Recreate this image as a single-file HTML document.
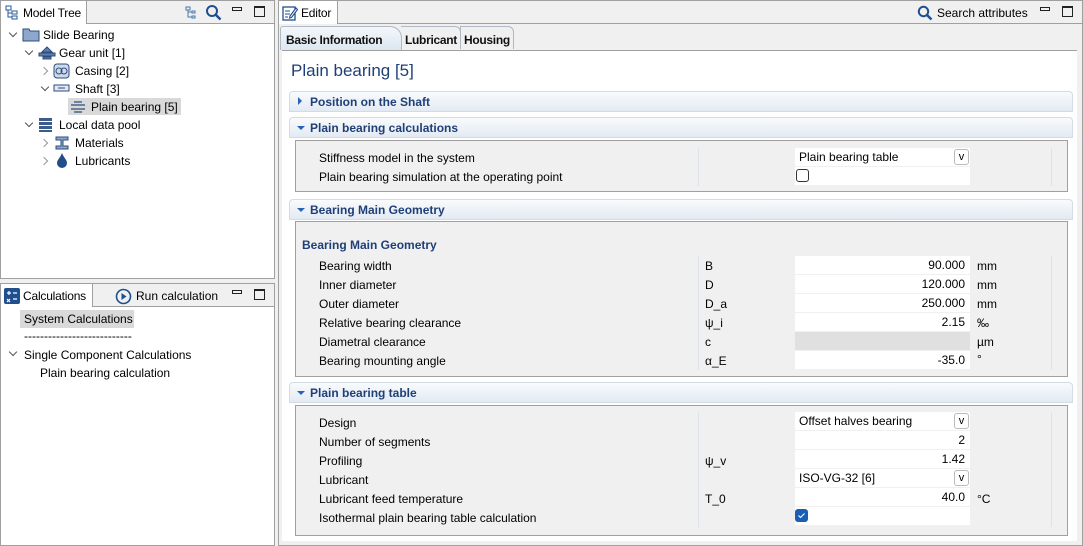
<!DOCTYPE html>
<html><head><meta charset="utf-8">
<style>
*{box-sizing:border-box;margin:0;padding:0}
body{width:1083px;height:546px;background:#f0f0f0;font-family:"Liberation Sans",sans-serif;font-size:12px;color:#000;position:relative;overflow:hidden}
.a{position:absolute;white-space:nowrap}
.panel{position:absolute;border:1px solid #a0a0a0;background:#fff}
.hdr{position:absolute;left:0;right:0;top:0;height:23px;background:#f0f0f0;border-bottom:1px solid #a0a0a0}
.tab{position:absolute;top:-1px;height:24px;background:#fff;border:1px solid #a0a0a0;border-bottom:none;padding:5px 0 0 22px;white-space:nowrap;letter-spacing:-0.2px}
.sec{position:absolute;left:289px;width:784px;height:21px;border:1px solid #d3dbe6;border-radius:4px 4px 0 0;background:linear-gradient(#f9fbfd,#e3eaf3);color:#1f3f77;font-weight:bold;padding:3px 0 0 20px}
.tri{position:absolute;left:7px;top:8px;width:0;height:0;border-left:4px solid transparent;border-right:4px solid transparent;border-top:4px solid #2a62b8}
.trir{position:absolute;left:8px;top:5px;width:0;height:0;border-top:4px solid transparent;border-bottom:4px solid transparent;border-left:4px solid #2a62b8}
.body{position:absolute;left:295px;width:773px;background:#f0f0f0;border:1px solid #a0a0a0}
.val{position:absolute;left:795px;width:175px;height:18px;background:#fff;text-align:right;padding:2px 5px 0 4px}
.vl{text-align:left}
.dd{position:absolute;right:1px;top:1px;width:15px;height:16px;border:1px solid #bbb;border-radius:3px;font-size:11px;text-align:center;line-height:14px;background:#fff}
.vd{position:absolute;width:1px;background:#dde3ea}
.min{position:absolute;width:10px;height:4px;border:1px solid #222}
.max{position:absolute;width:11px;height:11px;border:1px solid #222;border-top-width:2px}
.chev{position:absolute;width:6px;height:6px;border-right:1.3px solid #555;border-bottom:1.3px solid #555}
.d{transform:rotate(45deg)}
.r{transform:rotate(-45deg);border-color:#999}
.st{position:absolute;font-weight:bold;color:#111;white-space:nowrap;letter-spacing:-0.3px;font-size:12px}
</style></head><body>

<!-- Model tree panel -->
<div class="panel" style="left:0;top:0;width:275px;height:279px">
 <div class="hdr"></div>
 <div class="tab" style="left:-1px;width:87px">Model Tree</div>
 <svg class="a" style="left:4px;top:4px" width="14" height="15"><rect x="1" y="1" width="5" height="4" fill="none" stroke="#2a5a9a"/><rect x="7" y="6" width="5" height="3" fill="none" stroke="#2a5a9a"/><rect x="7" y="11" width="5" height="3" fill="none" stroke="#2a5a9a"/><path d="M3 5v7h4M3 8h4" stroke="#2a5a9a" fill="none"/></svg>
 <svg class="a" style="left:183px;top:4px" width="14" height="15"><path d="M2 2h4v3H2zM8 6h3v2H8zM8 11h3v2H8zM4 5v7h4M4 7h4" stroke="#4a78b0" fill="none"/></svg>
 <svg class="a" style="left:204px;top:3px" width="17" height="17"><circle cx="7" cy="7" r="5" fill="none" stroke="#1d4f91" stroke-width="2"/><path d="M10.5 10.5l5 5" stroke="#1d4f91" stroke-width="2.5"/></svg>
 <div class="min" style="left:231px;top:6px"></div>
 <div class="max" style="left:253px;top:5px"></div>
</div>
<div class="chev d a" style="left:10px;top:30px"></div>
<svg class="a" style="left:22px;top:28px" width="18" height="14"><path d="M1 1h6l1 2h9v10H1z" fill="#8ea7cc" stroke="#2e4d7d"/></svg>
<div class="a" style="left:43px;top:28px">Slide Bearing</div>
<div class="chev d a" style="left:26px;top:48px"></div>
<svg class="a" style="left:38px;top:45px" width="18" height="16"><path d="M4 7l5-5 5 5zM1 8h16v3H1zM5 12h8v2H5z" fill="#5d7fb0" stroke="#2e4d7d"/></svg>
<div class="a" style="left:59px;top:46px">Gear unit [1]</div>
<div class="chev r a" style="left:41px;top:68px"></div>
<svg class="a" style="left:53px;top:63px" width="17" height="16"><rect x="1" y="1" width="15" height="14" rx="3" fill="#cfd9ea" stroke="#2e4d7d"/><circle cx="6" cy="8" r="3" fill="none" stroke="#2e4d7d"/><circle cx="11" cy="8" r="3" fill="none" stroke="#2e4d7d"/></svg>
<div class="a" style="left:75px;top:64px">Casing [2]</div>
<div class="chev d a" style="left:42px;top:84px"></div>
<svg class="a" style="left:53px;top:84px" width="17" height="8"><rect x="1" y="1" width="15" height="6" fill="#e0e8f3" stroke="#2e4d7d"/><path d="M5 4h7" stroke="#2e4d7d"/></svg>
<div class="a" style="left:75px;top:82px">Shaft [3]</div>
<div class="a" style="left:68px;top:98px;width:113px;height:17px;background:#d9d9d9"></div>
<svg class="a" style="left:70px;top:100px" width="16" height="14"><path d="M4 2h8M1 5h14M1 9h14M4 12h8" stroke="#2e4d7d" stroke-width="1.3"/></svg>
<div class="a" style="left:91px;top:100px">Plain bearing [5]</div>
<div class="chev d a" style="left:26px;top:120px"></div>
<svg class="a" style="left:38px;top:117px" width="15" height="16"><rect x="1" y="1" width="13" height="3" fill="#3c5c8c"/><rect x="1" y="5" width="13" height="3" fill="#3c5c8c"/><rect x="1" y="9" width="13" height="3" fill="#3c5c8c"/><rect x="1" y="13" width="13" height="2" fill="#3c5c8c"/></svg>
<div class="a" style="left:59px;top:118px">Local data pool</div>
<div class="chev r a" style="left:41px;top:140px"></div>
<svg class="a" style="left:54px;top:135px" width="17" height="16"><path d="M2 2h12v3H9v6h5v3H2v-3h5V5H2z" fill="#8ea7cc" stroke="#2e4d7d"/></svg>
<div class="a" style="left:75px;top:136px">Materials</div>
<div class="chev r a" style="left:41px;top:158px"></div>
<svg class="a" style="left:56px;top:152px" width="12" height="16"><path d="M6 1C4 6 1 8 1 11a5 5 0 0 0 10 0C11 8 8 6 6 1z" fill="#234d88"/></svg>
<div class="a" style="left:75px;top:154px">Lubricants</div>

<!-- Calculations panel -->
<div class="panel" style="left:0;top:283px;width:275px;height:263px">
 <div class="hdr"></div>
 <div class="tab" style="left:-1px;width:93px">Calculations</div>
 <svg class="a" style="left:3px;top:4px" width="16" height="16"><rect width="16" height="16" rx="2" fill="#1f4f8f"/><path d="M3 5h4M5 3v4M9 5h4M3 11l3 3M6 11l-3 3M9 11h4" stroke="#fff" stroke-width="1.2"/></svg>
 <svg class="a" style="left:114px;top:4px" width="17" height="17"><circle cx="8.5" cy="8.5" r="7" fill="none" stroke="#1d4f91" stroke-width="1.6"/><path d="M6.5 5v7l5-3.5z" fill="#1d4f91"/></svg>
 <div class="a" style="left:135px;top:5px">Run calculation</div>
 <div class="min" style="left:231px;top:6px"></div>
 <div class="max" style="left:253px;top:5px"></div>
</div>
<div class="a" style="left:20px;top:310px;width:114px;height:18px;background:#d9d9d9"></div>
<div class="a" style="left:24px;top:312px">System Calculations</div>
<div class="a" style="left:24px;top:329px">---------------------------</div>
<div class="chev d a" style="left:10px;top:349px"></div>
<div class="a" style="left:24px;top:348px">Single Component Calculations</div>
<div class="a" style="left:40px;top:366px">Plain bearing calculation</div>

<!-- Editor panel -->
<div class="panel" style="left:278px;top:0;width:805px;height:546px;background:#f0f0f0">
 <div class="hdr"></div>
 <div class="tab" style="left:-1px;width:60px">Editor</div>
 <svg class="a" style="left:3px;top:4px" width="16" height="16"><rect x="1" y="2" width="12" height="13" fill="none" stroke="#1f4f8f" stroke-width="1.3"/><path d="M3 6h5M3 9h5M3 12h3M8 11l6-8 1.5 1.5-6 8-2 .5z" stroke="#1f4f8f" fill="#fff" stroke-width="1.1"/></svg>
 <svg class="a" style="left:638px;top:4px" width="16" height="16"><circle cx="6.5" cy="6.5" r="4.7" fill="none" stroke="#1d4f91" stroke-width="2"/><path d="M10 10l4.5 4.5" stroke="#1d4f91" stroke-width="2.4"/></svg>
 <div class="a" style="left:658px;top:5px">Search attributes</div>
 <div class="min" style="left:761px;top:6px"></div>
 <div class="max" style="left:783px;top:5px"></div>
</div>
<!-- subtabs -->
<div class="a" style="left:280px;top:26px;width:122px;height:24px;border:1px solid #b0b8c4;border-bottom:none;border-radius:3px 12px 0 0;background:linear-gradient(#f4f7fb,#dde6f1)"></div>
<div class="st" style="left:286px;top:33px">Basic Information</div>
<div class="a" style="left:401px;top:26px;width:60px;height:23px;border:1px solid #b0b8c4;border-bottom:none;border-left:none;border-radius:0 6px 0 0"></div>
<div class="st" style="left:405px;top:33px">Lubricant</div>
<div class="a" style="left:460px;top:26px;width:54px;height:23px;border:1px solid #b0b8c4;border-bottom:none;border-radius:0 6px 0 0"></div>
<div class="st" style="left:464px;top:33px">Housing</div>
<div class="a" style="left:282px;top:50px;width:795px;height:491px;background:#fff;border-top:1px solid #a0a0a0"></div>
<div class="a" style="left:291px;top:61px;font-size:17px;color:#1f3f77">Plain bearing [5]</div>

<div class="sec" style="top:91px"><div class="trir"></div>Position on the Shaft</div>
<div class="sec" style="top:117px"><div class="tri"></div>Plain bearing calculations</div>
<div class="body" style="top:140px;height:52px"></div>
<div class="sec" style="top:199px"><div class="tri"></div>Bearing Main Geometry</div>
<div class="body" style="top:221px;height:156px"></div>
<div class="sec" style="top:382px"><div class="tri"></div>Plain bearing table</div>
<div class="body" style="top:405px;height:131px"></div>

<div class="vd" style="left:698px;top:148px;height:38px"></div>
<div class="vd" style="left:1051px;top:148px;height:38px"></div>
<div class="vd" style="left:698px;top:256px;height:114px"></div>
<div class="vd" style="left:1051px;top:256px;height:114px"></div>
<div class="vd" style="left:698px;top:412px;height:115px"></div>
<div class="vd" style="left:1051px;top:412px;height:115px"></div>

<div class="a" style="left:319px;top:151px">Stiffness model in the system</div>
<div class="a" style="left:319px;top:170px">Plain bearing simulation at the operating point</div>
<div class="val vl" style="top:148px">Plain bearing table<div class="dd">v</div></div>
<div class="val vl" style="top:167px"><div class="a" style="left:1px;top:2px;width:13px;height:13px;border:1px solid #333;border-radius:3px"></div></div>

<div class="a" style="left:302px;top:238px;font-weight:bold;color:#1f3f77">Bearing Main Geometry</div>
<div class="a" style="left:319px;top:259px">Bearing width</div><div class="a" style="left:705px;top:259px">B</div><div class="val" style="top:256px">90.000</div><div class="a" style="left:977px;top:259px">mm</div>
<div class="a" style="left:319px;top:278px">Inner diameter</div><div class="a" style="left:705px;top:278px">D</div><div class="val" style="top:275px">120.000</div><div class="a" style="left:977px;top:278px">mm</div>
<div class="a" style="left:319px;top:297px">Outer diameter</div><div class="a" style="left:705px;top:297px">D_a</div><div class="val" style="top:294px">250.000</div><div class="a" style="left:977px;top:297px">mm</div>
<div class="a" style="left:319px;top:316px">Relative bearing clearance</div><div class="a" style="left:705px;top:316px">ψ_i</div><div class="val" style="top:313px">2.15</div><div class="a" style="left:977px;top:316px">‰</div>
<div class="a" style="left:319px;top:335px">Diametral clearance</div><div class="a" style="left:705px;top:335px">c</div><div class="val" style="top:332px;background:#e0e0e0"></div><div class="a" style="left:977px;top:335px">µm</div>
<div class="a" style="left:319px;top:354px">Bearing mounting angle</div><div class="a" style="left:705px;top:354px">α_E</div><div class="val" style="top:351px">-35.0</div><div class="a" style="left:977px;top:352px">°</div>

<div class="a" style="left:319px;top:416px">Design</div><div class="val vl" style="top:412px">Offset halves bearing<div class="dd">v</div></div>
<div class="a" style="left:319px;top:435px">Number of segments</div><div class="val" style="top:431px">2</div>
<div class="a" style="left:319px;top:454px">Profiling</div><div class="a" style="left:705px;top:454px">ψ_v</div><div class="val" style="top:450px">1.42</div>
<div class="a" style="left:319px;top:473px">Lubricant</div><div class="val vl" style="top:469px">ISO-VG-32 [6]<div class="dd">v</div></div>
<div class="a" style="left:319px;top:492px">Lubricant feed temperature</div><div class="a" style="left:705px;top:492px">T_0</div><div class="val" style="top:488px">40.0</div><div class="a" style="left:977px;top:492px">°C</div>
<div class="a" style="left:319px;top:511px">Isothermal plain bearing table calculation</div>
<div class="val vl" style="top:507px"><svg class="a" style="left:0;top:2px" width="13" height="13"><rect width="13" height="13" rx="3" fill="#1a5fb4"/><path d="M3.5 6.5l2 2 4-4" stroke="#fff" fill="none" stroke-width="1.1"/></svg></div>
</body></html>
